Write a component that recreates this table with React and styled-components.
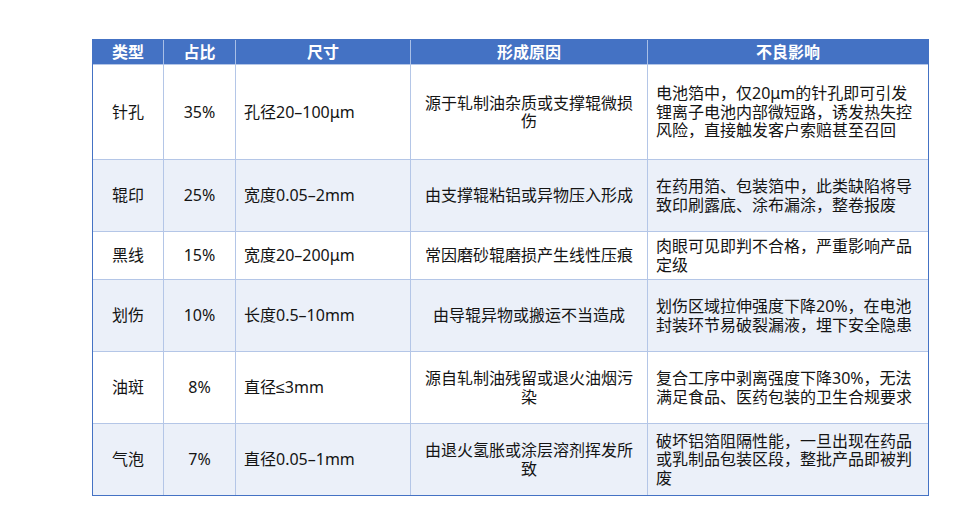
import React from 'react';
import styled, { createGlobalStyle } from 'styled-components';

const GlobalStyle = createGlobalStyle`
  html, body {
    margin: 0;
    padding: 0;
    background: #ffffff;
  }
  body {
    font-family: "Noto Sans", "Liberation Sans", "Noto Sans CJK SC", sans-serif;
    color: #141414;
  }
`;

const Page = styled.div`
  width: 955px;
  height: 530px;
  box-sizing: border-box;
  padding: 39px 0 0 92px;
`;

const Table = styled.table`
  width: 835px;
  table-layout: fixed;
  border-collapse: separate;
  border-spacing: 0;
  border: 1px solid #4472c4;
  font-size: 16px;
  line-height: 18.5px;
`;

const HeadCell = styled.th`
  height: 24px;
  padding: 0 6px;
  background: #4472c4;
  color: #ffffff;
  font-weight: 700;
  font-size: 16px;
  text-align: center;
  vertical-align: middle;
  border-right: 1px solid #a9bfe6;
  &:last-child {
    border-right: none;
  }
`;

const Row = styled.tr`
  height: ${(p) => p.$height}px;
  background: ${(p) => (p.$striped ? '#ebf0f9' : '#ffffff')};
`;

const Cell = styled.td`
  padding: 0 8px;
  text-align: ${(p) => p.$align || 'left'};
  vertical-align: middle;
  border-top: 1px solid #b4c6e7;
  border-right: 1px solid #b4c6e7;
  &:last-child {
    border-right: none;
  }
`;

const Line = styled.span`
  display: block;
  white-space: nowrap;
`;

const columns = [
  { title: '类型', width: 71 },
  { title: '占比', width: 72 },
  { title: '尺寸', width: 175 },
  { title: '形成原因', width: 237 },
  { title: '不良影响', width: 280 },
];

const rows = [
  {
    height: 95,
    type: '针孔',
    share: '35%',
    size: '孔径20–100μm',
    cause: ['源于轧制油杂质或支撑辊微损', '伤'],
    effect: ['电池箔中，仅20μm的针孔即可引发', '锂离子电池内部微短路，诱发热失控', '风险，直接触发客户索赔甚至召回'],
  },
  {
    height: 72,
    type: '辊印',
    share: '25%',
    size: '宽度0.05–2mm',
    cause: ['由支撑辊粘铝或异物压入形成'],
    effect: ['在药用箔、包装箔中，此类缺陷将导', '致印刷露底、涂布漏涂，整卷报废'],
  },
  {
    height: 48,
    type: '黑线',
    share: '15%',
    size: '宽度20–200μm',
    cause: ['常因磨砂辊磨损产生线性压痕'],
    effect: ['肉眼可见即判不合格，严重影响产品', '定级'],
  },
  {
    height: 72,
    type: '划伤',
    share: '10%',
    size: '长度0.5–10mm',
    cause: ['由导辊异物或搬运不当造成'],
    effect: ['划伤区域拉伸强度下降20%，在电池', '封装环节易破裂漏液，埋下安全隐患'],
  },
  {
    height: 72,
    type: '油斑',
    share: '8%',
    size: '直径≤3mm',
    cause: ['源自轧制油残留或退火油烟污', '染'],
    effect: ['复合工序中剥离强度下降30%，无法', '满足食品、医药包装的卫生合规要求'],
  },
  {
    height: 72,
    type: '气泡',
    share: '7%',
    size: '直径0.05–1mm',
    cause: ['由退火氢胀或涂层溶剂挥发所', '致'],
    effect: ['破坏铝箔阻隔性能，一旦出现在药品', '或乳制品包装区段，整批产品即被判', '废'],
  },
];

const Lines = ({ items }) => items.map((text) => <Line key={text}>{text}</Line>);

const App = () => {
  return (
    <Page>
      <GlobalStyle />
      <Table>
        <colgroup>
          {columns.map((c) => (
            <col key={c.title} style={{ width: c.width }} />
          ))}
        </colgroup>
        <thead>
          <tr>
            {columns.map((c) => (
              <HeadCell key={c.title}>{c.title}</HeadCell>
            ))}
          </tr>
        </thead>
        <tbody>
          {rows.map((r, i) => (
            <Row key={r.type} $height={r.height} $striped={i % 2 === 1}>
              <Cell $align="center">{r.type}</Cell>
              <Cell $align="center">{r.share}</Cell>
              <Cell>{r.size}</Cell>
              <Cell $align="center">
                <Lines items={r.cause} />
              </Cell>
              <Cell>
                <Lines items={r.effect} />
              </Cell>
            </Row>
          ))}
        </tbody>
      </Table>
    </Page>
  );
};

export default App;
